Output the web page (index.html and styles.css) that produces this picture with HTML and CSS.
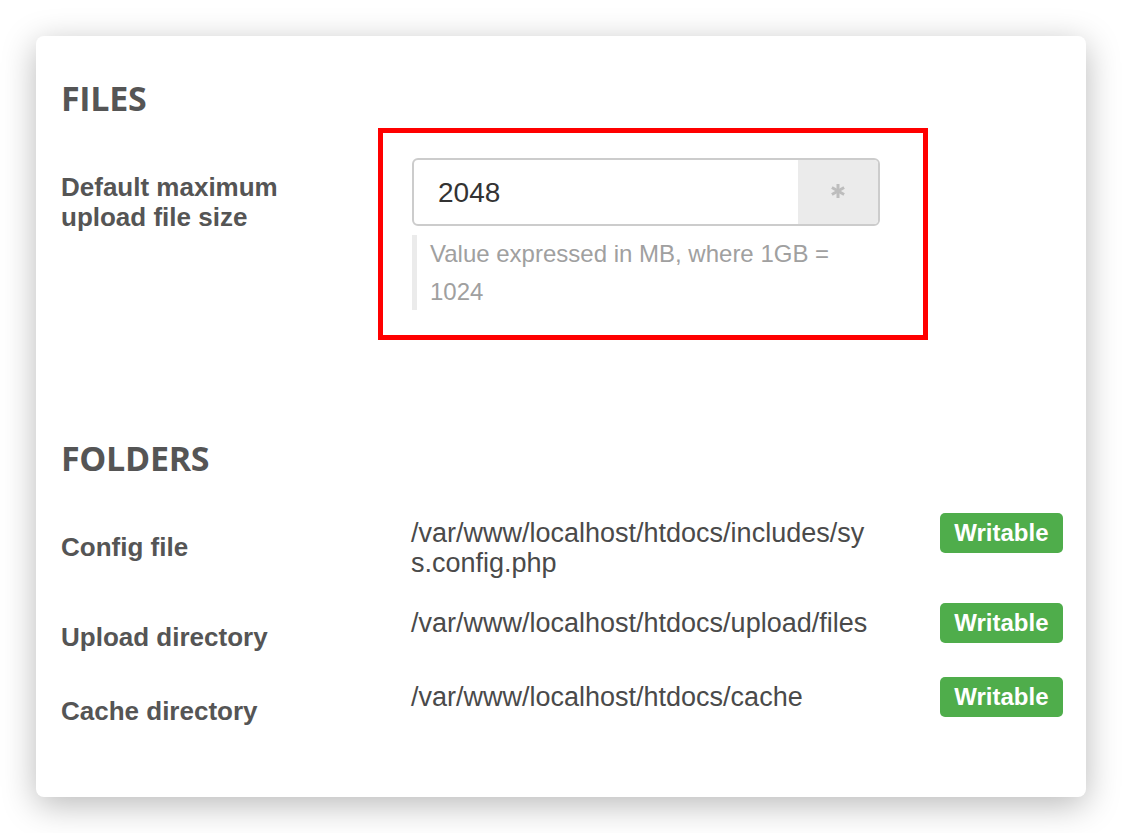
FILE: index.html
```html
<!DOCTYPE html>
<html lang="en">
<head>
<meta charset="utf-8">
<title>Settings</title>
<link rel="stylesheet" href="styles.css">
</head>
<body>
<div class="card">
  <section class="section section-files">
    <h2 class="section-title">FILES</h2>
    <div class="form-row">
      <div class="field-label">Default maximum upload file size</div>
      <div class="highlight">
        <div class="input-group">
          <div class="input-value">2048</div>
          <span class="input-addon">
            <svg class="asterisk" width="18" height="18" viewBox="0 0 18 18" aria-hidden="true">
              <g stroke="#bdbdbd" stroke-width="3" stroke-linecap="butt">
                <line x1="9" y1="2" x2="9" y2="16"/>
                <line x1="2.9" y1="5.5" x2="15.1" y2="12.5"/>
                <line x1="2.9" y1="12.5" x2="15.1" y2="5.5"/>
              </g>
            </svg>
          </span>
        </div>
        <p class="help-block">Value expressed in MB, where 1GB = 1024</p>
      </div>
    </div>
  </section>

  <section class="section section-folders">
    <h2 class="section-title">FOLDERS</h2>
    <div class="folder-grid">
      <div class="folder-label">Config file</div>
      <div class="folder-path">/var/www/localhost/htdocs/includes/sys.config.php</div>
      <span class="badge">Writable</span>

      <div class="folder-label">Upload directory</div>
      <div class="folder-path">/var/www/localhost/htdocs/upload/files</div>
      <span class="badge">Writable</span>

      <div class="folder-label">Cache directory</div>
      <div class="folder-path">/var/www/localhost/htdocs/cache</div>
      <span class="badge">Writable</span>
    </div>
  </section>
</div>
</body>
</html>
```

FILE: styles.css
```css
html, body {
  margin: 0;
  padding: 0;
  background: #ffffff;
}

body {
  padding: 36px;
  font-family: "Liberation Sans", Arial, sans-serif;
  color: #555555;
}

.card {
  background: #ffffff;
  border-radius: 8px;
  box-shadow: 0 8px 34px rgba(0, 0, 0, 0.28);
  padding: 41px 23px 71px 25px;
  min-height: 649px;
}

.section-title {
  margin: 0;
  font-family: "Open Sans", "DejaVu Sans", sans-serif;
  font-weight: 700;
  font-size: 34px;
  line-height: 42px;
  letter-spacing: -0.3px;
  color: #555555;
}

.section-files .section-title {
  margin-bottom: 9px;
}

.form-row {
  display: flex;
  align-items: flex-start;
}

.field-label {
  flex: 0 0 290px;
  margin-right: 27px;
  padding-top: 44px;
  font-weight: 700;
  font-size: 26px;
  line-height: 30px;
  color: #555555;
}

.highlight {
  width: 468px;
  border: 5px solid #ff0000;
  padding: 25px 43px 25px 29px;
}

.input-group {
  display: flex;
  height: 68px;
  box-sizing: border-box;
  border: 2px solid #cccccc;
  border-radius: 6px;
  overflow: hidden;
}

.input-value {
  flex: 1;
  padding: 2px 0 0 24px;
  font-size: 28px;
  line-height: 62px;
  color: #333333;
}

.input-addon {
  flex: 0 0 80px;
  background: #ebebeb;
  display: flex;
  align-items: center;
  justify-content: center;
}

.asterisk {
  display: block;
  margin-top: -2px;
}

.help-block {
  margin: 9px 0 0 0;
  border-left: 5px solid #ebebeb;
  padding-left: 13px;
  font-size: 24px;
  line-height: 37.5px;
  font-weight: 300;
  color: #a0a0a0;
}

.section-folders {
  margin-top: 97px;
}

.section-folders .section-title {
  margin-bottom: 34px;
}

.folder-grid {
  display: grid;
  grid-template-columns: 350px 460px 1fr;
  row-gap: 25px;
  align-items: start;
}

.folder-label {
  padding-top: 19px;
  font-weight: 700;
  font-size: 26px;
  line-height: 30px;
  color: #555555;
}

.folder-path {
  padding-top: 5px;
  font-size: 27px;
  line-height: 30px;
  color: #4a4a4a;
  word-break: break-all;
}

.badge {
  justify-self: end;
  display: inline-block;
  height: 40px;
  padding: 0 14.5px;
  border-radius: 5px;
  background: #4fad4b;
  color: #ffffff;
  font-weight: 700;
  font-size: 24px;
  line-height: 40px;
}
```
